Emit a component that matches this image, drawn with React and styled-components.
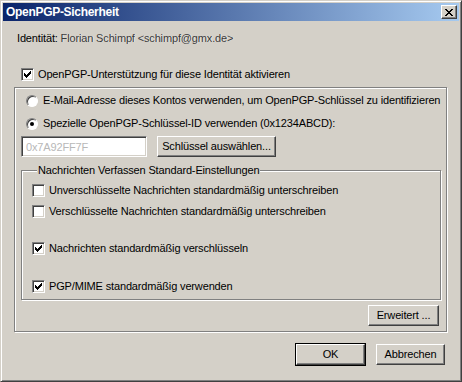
import styled, { createGlobalStyle } from 'styled-components'

const GlobalStyle = createGlobalStyle`
  html, body {
    margin: 0;
    padding: 0;
    background: #d4d0c8;
  }
  body {
    font-family: Tahoma, "Liberation Sans", Arial, sans-serif;
    font-size: 11px;
    letter-spacing: -0.15px;
    color: #000;
  }
`

const raised = `
  border: 1px solid;
  border-color: #fff #404040 #404040 #fff;
  box-shadow: inset -1px -1px 0 #808080;
`

const sunken = `
  border: 1px solid;
  border-color: #808080 #fff #fff #808080;
  box-shadow: inset 1px 1px 0 #404040, inset -1px -1px 0 #d4d0c8;
`

const Window = styled.div`
  width: 462px;
  height: 382px;
  box-sizing: border-box;
  background: #d4d0c8;
  border: 1px solid;
  border-color: #d4d0c8 #404040 #404040 #d4d0c8;
  box-shadow: inset 1px 1px 0 #fff, inset -1px -1px 0 #808080;
  padding: 2px;
  display: flex;
  flex-direction: column;
`

const TitleBar = styled.div`
  height: 18px;
  flex: none;
  display: flex;
  align-items: center;
  justify-content: space-between;
  padding: 0 2px 0 3px;
  background: linear-gradient(to right, #0a246a, #a6caf0);
  color: #fff;
  font-weight: bold;
  font-size: 12px;
  letter-spacing: -0.3px;
`

const CloseButton = styled.div`
  width: 16px;
  height: 14px;
  box-sizing: border-box;
  background: #d4d0c8;
  ${raised}
  display: flex;
  align-items: center;
  justify-content: center;
`

const Body = styled.div`
  flex: 1;
  display: flex;
  flex-direction: column;
  padding: 11px 12px 0 11px;
`

const Identity = styled.div`
  line-height: 13px;
  margin-left: 3px;
`

const Hidden = styled.span`
  color: #3a3a3a;
  text-shadow: 1px 0 0 rgba(255, 255, 255, 0.5);
`

const Row = styled.label`
  display: flex;
  align-items: center;
  height: 13px;
  line-height: 13px;
  gap: 4px;
  margin-left: ${p => p.$indent || 0}px;
  margin-top: ${p => p.$top || 0}px;
  white-space: nowrap;
`

const Box = styled.span`
  width: 13px;
  height: 13px;
  box-sizing: border-box;
  flex: none;
  background: #fff;
  ${sunken}
  display: flex;
  align-items: center;
  justify-content: center;
`

const Radio = styled.span`
  width: 12px;
  height: 12px;
  box-sizing: border-box;
  flex: none;
  border-radius: 50%;
  background: #fff;
  border: 1px solid;
  border-color: #808080 #fff #fff #808080;
  box-shadow: inset 1px 1px 0 #404040;
  display: flex;
  align-items: center;
  justify-content: center;
  margin-right: 1px;
  &::after {
    content: '';
    width: 4px;
    height: 4px;
    border-radius: 50%;
    background: ${p => (p.$on ? '#000' : 'transparent')};
  }
`

const Group = styled.div`
  display: flex;
  flex-direction: column;
  border: 1px solid #808080;
  box-shadow: inset 1px 1px 0 #fff, 1px 1px 0 #fff;
  padding: ${p => p.$pad};
  margin-top: ${p => p.$top || 0}px;
`

const Legend = styled.div`
  align-self: flex-start;
  margin: -7px 0 0 5px;
  padding: 0 1px;
  line-height: 13px;
  background: #d4d0c8;
`

const KeyRow = styled.div`
  display: flex;
  align-items: center;
  gap: 10px;
  margin-top: 6px;
`

const TextInput = styled.div`
  width: 126px;
  height: 21px;
  box-sizing: border-box;
  background: #fff;
  ${sunken}
  display: flex;
  align-items: center;
  padding-left: 4px;
  color: #b8b8b8;
`

const Button = styled.div`
  height: 21px;
  width: ${p => p.$w}px;
  box-sizing: border-box;
  background: #d4d0c8;
  ${raised}
  ${p => p.$default && `
    outline: 1px solid #000;
    outline-offset: 0;
  `}
  display: flex;
  align-items: center;
  justify-content: center;
  line-height: 13px;
  align-self: ${p => p.$align || 'auto'};
  margin-right: ${p => p.$right || 0}px;
  margin-top: ${p => p.$top || 0}px;
`

const Footer = styled.div`
  display: flex;
  justify-content: flex-end;
  gap: 11px;
  margin-top: 12px;
  padding-right: 2px;
`

const Check = () => (
  <svg width="7" height="7" viewBox="0 0 7 7">
    <path d="M0 2h1v1h1v1h1V3h1V2h1V1h1V0h1v3H6v1H5v1H4v1H3v1H2V6H1V5H0z" fill="#000" />
  </svg>
)

const CloseX = () => (
  <svg width="8" height="7" viewBox="0 0 8 7">
    <path d="M0 0h2v1h1v1h2V1h1V0h2v1H7v1H6v1H5v1h1v1h1v1h1v1H6V6H5V5H3v1H2v1H0V6h1V5h1V4h1V3H2V2H1V1H0z" fill="#000" />
  </svg>
)

function CheckRow({ checked, children, ...rest }) {
  return (
    <Row {...rest}>
      <Box>{checked && <Check />}</Box>
      <span>{children}</span>
    </Row>
  )
}

export default function App() {
  return (
    <Window>
      <GlobalStyle />
      <TitleBar>
        <span>OpenPGP-Sicherheit</span>
        <CloseButton><CloseX /></CloseButton>
      </TitleBar>
      <Body>
        <Identity>
          Identität: <Hidden>Florian Schimpf &lt;schimpf@gmx.de&gt;</Hidden>
        </Identity>
        <CheckRow checked $indent={7} $top={23}>
          OpenPGP-Unterstützung für diese Identität aktivieren
        </CheckRow>

        <Group $top={6} $pad="6px 5px 5px 6px">
          <Row $indent={5}>
            <Radio />
            <span>E-Mail-Adresse dieses Kontos verwenden, um OpenPGP-Schlüssel zu identifizieren</span>
          </Row>
          <Row $indent={5} $top={10}>
            <Radio $on />
            <span>Spezielle OpenPGP-Schlüssel-ID verwenden (0x1234ABCD):</span>
          </Row>
          <KeyRow>
            <TextInput>0x7A92FF7F</TextInput>
            <Button $w={119}>Schlüssel auswählen...</Button>
          </KeyRow>

          <Group $top={13} $pad="0 6px 6px 10px">
            <Legend>Nachrichten Verfassen Standard-Einstellungen</Legend>
            <CheckRow $top={7}>Unverschlüsselte Nachrichten standardmäßig unterschreiben</CheckRow>
            <CheckRow $top={8}>Verschlüsselte Nachrichten standardmäßig unterschreiben</CheckRow>
            <CheckRow checked $top={24}>Nachrichten standardmäßig verschlüsseln</CheckRow>
            <CheckRow checked $top={25}>PGP/MIME standardmäßig verwenden</CheckRow>
          </Group>

          <Button $w={71} $align="flex-end" $right={2} $top={5}>Erweitert ...</Button>
        </Group>

        <Footer>
          <Button $w={69} $default>OK</Button>
          <Button $w={69}>Abbrechen</Button>
        </Footer>
      </Body>
    </Window>
  )
}
